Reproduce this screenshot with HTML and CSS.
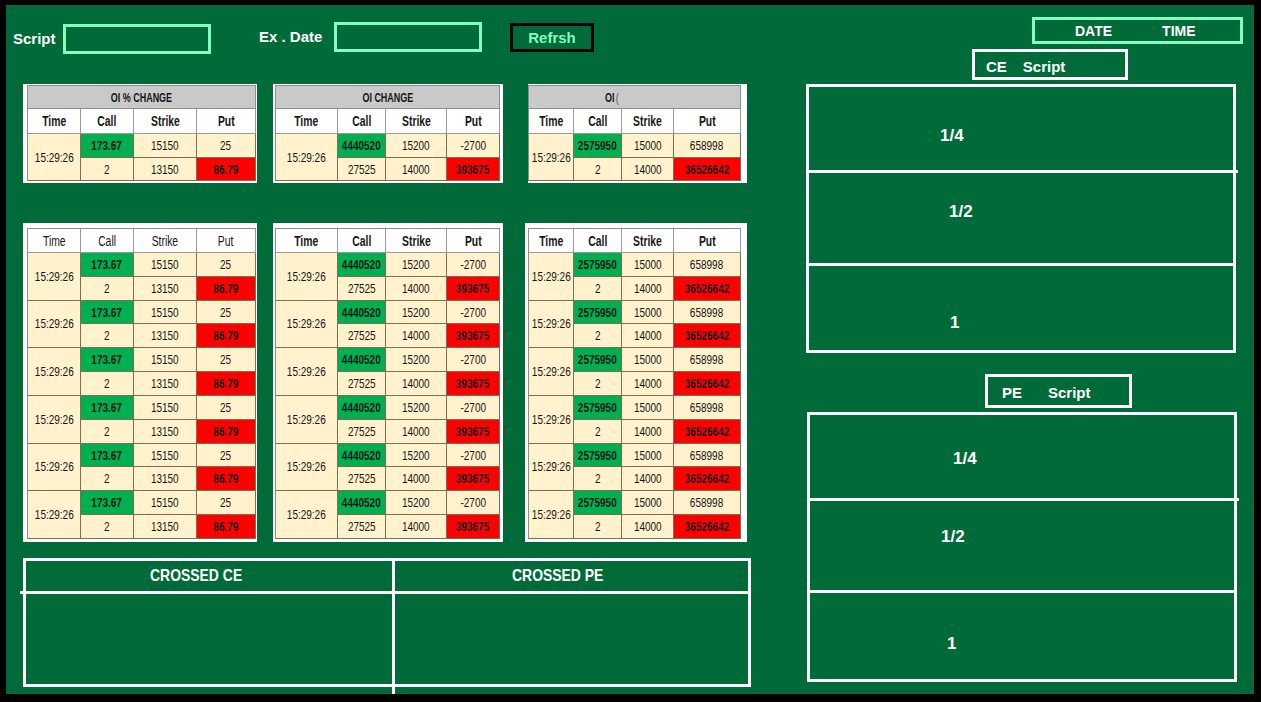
FILE: index.html
```html
<!DOCTYPE html>
<html>
<head>
<meta charset="utf-8">
<title>OI Dashboard</title>
<link rel="stylesheet" href="styles.css">
</head>
<body>
<div class="screen">
  <div class="left">
    <div class="toolbar">
      <span class="lbl lbl-script">Script</span>
      <div class="field field-script"></div>
      <span class="lbl lbl-date">Ex . Date</span>
      <div class="field field-date"></div>
      <div class="btn-refresh">Refrsh</div>
    </div>

    <div class="tables tables-top">
      <div class="frame frame-a">
        <div class="grid grid-a">
          <div class="title"><span>OI % CHANGE</span></div>
          <div class="hd b"><span>Time</span></div><div class="hd b"><span>Call</span></div><div class="hd b"><span>Strike</span></div><div class="hd b"><span>Put</span></div>
          <div class="time"><span>15:29:26</span></div><div class="up"><span>173.67</span></div><div><span>15150</span></div><div><span>25</span></div>
          <div><span>2</span></div><div><span>13150</span></div><div class="dn"><span>86.79</span></div>
        </div>
      </div>
      <div class="frame frame-b">
        <div class="grid grid-b">
          <div class="title"><span>OI CHANGE</span></div>
          <div class="hd b"><span>Time</span></div><div class="hd b"><span>Call</span></div><div class="hd b"><span>Strike</span></div><div class="hd b"><span>Put</span></div>
          <div class="time"><span>15:29:26</span></div><div class="up"><span>4440520</span></div><div><span>15200</span></div><div><span>-2700</span></div>
          <div><span>27525</span></div><div><span>14000</span></div><div class="dn"><span>393675</span></div>
        </div>
      </div>
      <div class="frame frame-c">
        <div class="grid grid-c">
          <div class="title title-c"><span>OI<i class="paren">(</i></span></div>
          <div class="hd b"><span>Time</span></div><div class="hd b"><span>Call</span></div><div class="hd b"><span>Strike</span></div><div class="hd b"><span>Put</span></div>
          <div class="time"><span>15:29:26</span></div><div class="up"><span>2575950</span></div><div><span>15000</span></div><div><span>658998</span></div>
          <div><span>2</span></div><div><span>14000</span></div><div class="dn"><span>36526642</span></div>
        </div>
      </div>
    </div>

    <div class="tables tables-bottom">
      <div class="frame frame-a">
        <div class="grid grid-a">
          <div class="hd"><span>Time</span></div><div class="hd"><span>Call</span></div><div class="hd"><span>Strike</span></div><div class="hd"><span>Put</span></div>
          <div class="time"><span>15:29:26</span></div><div class="up"><span>173.67</span></div><div><span>15150</span></div><div><span>25</span></div>
          <div><span>2</span></div><div><span>13150</span></div><div class="dn"><span>86.79</span></div>
          <div class="time"><span>15:29:26</span></div><div class="up"><span>173.67</span></div><div><span>15150</span></div><div><span>25</span></div>
          <div><span>2</span></div><div><span>13150</span></div><div class="dn"><span>86.79</span></div>
          <div class="time"><span>15:29:26</span></div><div class="up"><span>173.67</span></div><div><span>15150</span></div><div><span>25</span></div>
          <div><span>2</span></div><div><span>13150</span></div><div class="dn"><span>86.79</span></div>
          <div class="time"><span>15:29:26</span></div><div class="up"><span>173.67</span></div><div><span>15150</span></div><div><span>25</span></div>
          <div><span>2</span></div><div><span>13150</span></div><div class="dn"><span>86.79</span></div>
          <div class="time"><span>15:29:26</span></div><div class="up"><span>173.67</span></div><div><span>15150</span></div><div><span>25</span></div>
          <div><span>2</span></div><div><span>13150</span></div><div class="dn"><span>86.79</span></div>
          <div class="time"><span>15:29:26</span></div><div class="up"><span>173.67</span></div><div><span>15150</span></div><div><span>25</span></div>
          <div><span>2</span></div><div><span>13150</span></div><div class="dn"><span>86.79</span></div>
        </div>
      </div>
      <div class="frame frame-b">
        <div class="grid grid-b">
          <div class="hd b"><span>Time</span></div><div class="hd b"><span>Call</span></div><div class="hd b"><span>Strike</span></div><div class="hd b"><span>Put</span></div>
          <div class="time"><span>15:29:26</span></div><div class="up"><span>4440520</span></div><div><span>15200</span></div><div><span>-2700</span></div>
          <div><span>27525</span></div><div><span>14000</span></div><div class="dn"><span>393675</span></div>
          <div class="time"><span>15:29:26</span></div><div class="up"><span>4440520</span></div><div><span>15200</span></div><div><span>-2700</span></div>
          <div><span>27525</span></div><div><span>14000</span></div><div class="dn"><span>393675</span></div>
          <div class="time"><span>15:29:26</span></div><div class="up"><span>4440520</span></div><div><span>15200</span></div><div><span>-2700</span></div>
          <div><span>27525</span></div><div><span>14000</span></div><div class="dn"><span>393675</span></div>
          <div class="time"><span>15:29:26</span></div><div class="up"><span>4440520</span></div><div><span>15200</span></div><div><span>-2700</span></div>
          <div><span>27525</span></div><div><span>14000</span></div><div class="dn"><span>393675</span></div>
          <div class="time"><span>15:29:26</span></div><div class="up"><span>4440520</span></div><div><span>15200</span></div><div><span>-2700</span></div>
          <div><span>27525</span></div><div><span>14000</span></div><div class="dn"><span>393675</span></div>
          <div class="time"><span>15:29:26</span></div><div class="up"><span>4440520</span></div><div><span>15200</span></div><div><span>-2700</span></div>
          <div><span>27525</span></div><div><span>14000</span></div><div class="dn"><span>393675</span></div>
        </div>
      </div>
      <div class="frame frame-c">
        <div class="grid grid-c">
          <div class="hd b"><span>Time</span></div><div class="hd b"><span>Call</span></div><div class="hd b"><span>Strike</span></div><div class="hd b"><span>Put</span></div>
          <div class="time"><span>15:29:26</span></div><div class="up"><span>2575950</span></div><div><span>15000</span></div><div><span>658998</span></div>
          <div><span>2</span></div><div><span>14000</span></div><div class="dn"><span>36526642</span></div>
          <div class="time"><span>15:29:26</span></div><div class="up"><span>2575950</span></div><div><span>15000</span></div><div><span>658998</span></div>
          <div><span>2</span></div><div><span>14000</span></div><div class="dn"><span>36526642</span></div>
          <div class="time"><span>15:29:26</span></div><div class="up"><span>2575950</span></div><div><span>15000</span></div><div><span>658998</span></div>
          <div><span>2</span></div><div><span>14000</span></div><div class="dn"><span>36526642</span></div>
          <div class="time"><span>15:29:26</span></div><div class="up"><span>2575950</span></div><div><span>15000</span></div><div><span>658998</span></div>
          <div><span>2</span></div><div><span>14000</span></div><div class="dn"><span>36526642</span></div>
          <div class="time"><span>15:29:26</span></div><div class="up"><span>2575950</span></div><div><span>15000</span></div><div><span>658998</span></div>
          <div><span>2</span></div><div><span>14000</span></div><div class="dn"><span>36526642</span></div>
          <div class="time"><span>15:29:26</span></div><div class="up"><span>2575950</span></div><div><span>15000</span></div><div><span>658998</span></div>
          <div><span>2</span></div><div><span>14000</span></div><div class="dn"><span>36526642</span></div>
        </div>
      </div>
    </div>

    <div class="crossed">
      <div class="xh xh-ce"><span>CROSSED CE</span></div>
      <div class="xh xh-pe"><span>CROSSED PE</span></div>
      <div class="xb xb-ce"></div>
      <div class="xb xb-pe"></div>
    </div>
  </div>

  <div class="right">
    <div class="datetime"><span>DATE</span><span>TIME</span></div>
    <div class="tag tag-ce"><span>CE</span><span>Script</span></div>
    <div class="bigbox bigbox-ce">
      <div class="zone z-first z-ce1">1/4</div>
      <div class="zone z-ce2">1/2</div>
      <div class="zone zone-last z-ce3">1</div>
    </div>
    <div class="tag tag-pe"><span>PE</span><span>Script</span></div>
    <div class="bigbox bigbox-pe">
      <div class="zone z-first z-pe1">1/4</div>
      <div class="zone z-pe2">1/2</div>
      <div class="zone zone-last z-pe3">1</div>
    </div>
  </div>
</div>
</body>
</html>
```
FILE: styles.css
```css
* { box-sizing: border-box; }
html, body { margin: 0; padding: 0; background: #000; }
body {
  width: 1261px;
  height: 702px;
  overflow: hidden;
  font-family: "Liberation Sans", Arial, sans-serif;
}

.screen {
  margin: 5px 0 0 6px;
  width: 1248px;
  height: 689px;
  background: #006a38;
  display: grid;
  grid-template-columns: 800px 448px;
}

/* ---------- left column ---------- */
.left { display: flex; flex-direction: column; align-items: flex-start; }

.toolbar {
  height: 79px;
  padding: 17px 0 0 7px;
  display: flex;
  align-items: flex-start;
}
.lbl { color: #fff; font-weight: 700; font-size: 15px; line-height: 15px; white-space: nowrap; }
.lbl-script { width: 50px; margin-top: 9px; }
.lbl-date { width: 75px; margin-left: 48px; margin-top: 7px; }
.field { border: 3px solid #80ffbf; width: 148px; height: 30px; }
.field-script { margin-top: 2px; }
.btn-refresh {
  margin-left: 28px;
  margin-top: 1px;
  width: 84px;
  height: 29px;
  border: 3px solid #000;
  color: #80ffbf;
  font-weight: 700;
  font-size: 15px;
  display: flex;
  align-items: center;
  justify-content: center;
}

.tables { display: flex; align-items: flex-start; padding-left: 17px; }
.tables-top { height: 99px; }
.tables-bottom { margin-top: 40px; }

.frame { background: #fff; }
.tables-top .frame-a { padding: 1px 1px 2px 4px; }
.tables-top .frame-b { padding: 1px 3px 2px 2px; margin-left: 16px; }
.tables-top .frame-c { padding: 1px 6px 2px 0; margin-left: 25px; }
.tables-bottom .frame-a { padding: 5px 1px 3px 4px; }
.tables-bottom .frame-b { padding: 5px 3px 3px 2px; margin-left: 16px; }
.tables-bottom .frame-c { padding: 5px 6px 3px 3px; margin-left: 22px; }

.grid {
  display: grid;
  border-top: 1px solid #8c8c8c;
  border-left: 1px solid #8c8c8c;
  font-family: "Liberation Sans", Arial, sans-serif;
  font-size: 13.5px;
  color: #161616;
}
.grid-a { grid-template-columns: 53px 53px 63px 59px; }
.grid-b { grid-template-columns: 62px 48px 61px 53px; }
.grid-c { grid-template-columns: 45px 48px 52px 67px; }
.tables-top .grid { grid-template-rows: 23px 25px 24px 23px; }
.tables-bottom .grid { grid-template-rows: 24px repeat(12, 23.83px); }

.grid > div {
  display: flex;
  align-items: center;
  justify-content: center;
  border-right: 1px solid #7a6e55;
  border-bottom: 1px solid #7a6e55;
  background: #fff2cc;
  white-space: nowrap;
}
.grid > div > span {
  display: inline-block;
  white-space: nowrap;
  transform: scaleX(0.74);
}
.grid > .title {
  grid-column: 1 / -1;
  background: #c9c9c9;
  font-weight: 700;
  font-size: 13px;
  border-right-color: #8e8e8e;
  border-bottom-color: #8e8e8e;
}
.grid > .title > span { transform: scaleX(0.69); }
.grid > .title-c { justify-content: flex-start; padding-left: 76px; }
.grid > .title-c > span { transform-origin: left center; }
.paren { font-style: normal; font-weight: 400; color: #555; margin-left: 2px; }
.grid > .hd { background: #fff; border-color: #9a9a9a; font-size: 14px; }
.grid > .hd.b { font-weight: 700; }
.grid > .time { grid-row: span 2; }
.grid > .up { background: #00b050; font-weight: 700; }
.grid > .dn { background: #ff0000; font-weight: 700; }

.crossed {
  position: relative;
  margin-left: 17px;
  margin-top: 16px;
  width: 728px;
  height: 129px;
  border: 3px solid #fff;
  display: grid;
  grid-template-columns: 369px 353px;
  grid-template-rows: 33px 90px;
}
.crossed::before {
  content: "";
  position: absolute;
  left: -6px;
  top: 30px;
  width: 3px;
  height: 3px;
  background: #fff;
}
.crossed::after {
  content: "";
  position: absolute;
  left: 366px;
  top: 100%;
  width: 3px;
  height: 10px;
  background: #fff;
}
.xh {
  border-bottom: 3px solid #fff;
  color: #fff;
  font-weight: 700;
  font-size: 17px;
  display: flex;
  align-items: center;
}
.xh > span {
  display: inline-block;
  white-space: nowrap;
  transform: scaleX(0.82);
  transform-origin: left center;
}
.xh-ce { border-right: 3px solid #fff; padding-left: 124px; }
.xh-pe { padding-left: 117px; }
.xb-ce { border-right: 3px solid #fff; }

/* ---------- right column ---------- */
.right { display: flex; flex-direction: column; align-items: flex-start; padding-top: 12px; }

.datetime {
  margin-left: 226px;
  width: 211px;
  height: 27px;
  border: 3px solid #80ffbf;
  display: flex;
  align-items: center;
  padding-left: 40px;
  gap: 50px;
  color: #fff;
  font-weight: 700;
  font-size: 14px;
}

.tag {
  border: 3px solid #fff;
  color: #fff;
  font-weight: 700;
  font-size: 15px;
  display: flex;
  align-items: center;
}
.tag-ce { margin-top: 5px; margin-left: 166px; width: 156px; height: 31px; padding: 3px 0 0 11px; gap: 16px; }
.tag-pe { margin-top: 21px; margin-left: 179px; width: 147px; height: 34px; padding: 2px 0 0 14px; gap: 26px; }

.bigbox { width: 430px; border: 3px solid #fff; display: flex; flex-direction: column; }
.bigbox-ce { margin-top: 4px; height: 269px; }
.bigbox-pe { margin-top: 4px; margin-left: 1px; height: 270px; }

.zone {
  border-bottom: 3px solid #fff;
  color: #fff;
  font-weight: 700;
  font-size: 17px;
  line-height: 17px;
}
.zone-last { border-bottom: 0; }
.z-first { position: relative; }
.z-first::after {
  content: "";
  position: absolute;
  right: -5px;
  bottom: -3px;
  width: 2px;
  height: 3px;
  background: #fff;
}
.z-ce1 { height: 86px; padding: 40px 0 0 131px; }
.z-ce2 { height: 93px; padding: 30px 0 0 140px; }
.z-ce3 { height: 84px; padding: 48px 0 0 141px; }
.z-pe1 { height: 86px; padding: 35px 0 0 143px; }
.z-pe2 { height: 92px; padding: 27px 0 0 131px; }
.z-pe3 { height: 86px; padding: 42px 0 0 137px; }
```
